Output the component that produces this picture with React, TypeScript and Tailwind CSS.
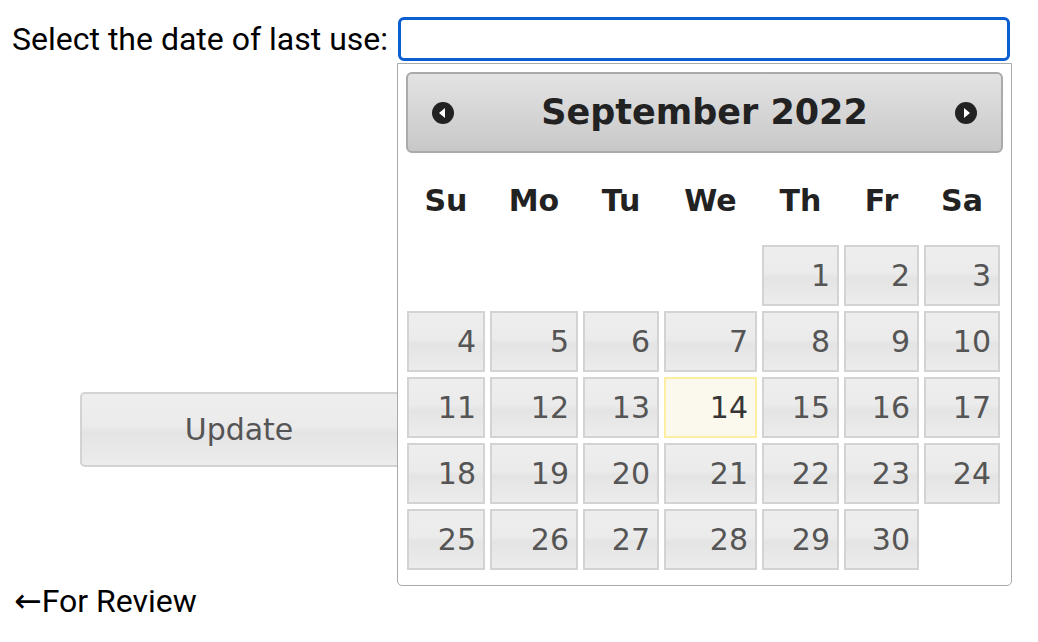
import React from "react";

const dayNames = ["Su", "Mo", "Tu", "We", "Th", "Fr", "Sa"];

// September 2022 starts on a Thursday
const cells: (number | null)[] = [
  null, null, null, null, 1, 2, 3,
  4, 5, 6, 7, 8, 9, 10,
  11, 12, 13, 14, 15, 16, 17,
  18, 19, 20, 21, 22, 23, 24,
  25, 26, 27, 28, 29, 30, null,
];

const cols = "grid grid-cols-[78px_88px_76px_93px_77px_75px_76px] gap-x-[5px]";

const CircleArrow = ({ dir }: { dir: "w" | "e" }) => (
  <svg width="24" height="24" viewBox="0 0 24 24">
    <circle cx="12" cy="12" r="11" fill="#222" />
    {dir === "w" ? (
      <polygon points="14,7 14,17 8,12" fill="#fff" />
    ) : (
      <polygon points="10,7 10,17 16,12" fill="#fff" />
    )}
  </svg>
);

const DayCell = ({ day }: { day: number | null }) => {
  if (day === null) return <div />;
  const today = day === 14;
  return (
    <a
      href="#"
      className={
        today
          ? "flex h-[61px] items-center justify-end border-2 border-[#fcefa1] bg-[#fbf9ee] pr-[7px] text-[#363636]"
          : "flex h-[61px] items-center justify-end border-2 border-[#d3d3d3] bg-[linear-gradient(to_bottom,#eeeeee_0%,#ebebeb_46%,#e4e4e4_54%,#ececec_100%)] pr-[7px] text-[#555]"
      }
    >
      {day}
    </a>
  );
};

const Datepicker = () => (
  <div className="absolute left-[397px] top-[63px] h-[523px] w-[615px] rounded-b-[5px] border border-[#aaa] bg-white px-[8px] pt-[8px] font-['DejaVu_Sans',sans-serif]">
    <div className="flex h-[81px] items-center justify-between rounded-[6px] border-2 border-[#aaa] bg-[linear-gradient(to_bottom,#e3e3e3,#c8c8c8)] px-[23px]">
      <CircleArrow dir="w" />
      <span className="text-[35px] font-bold text-[#222]">September 2022</span>
      <CircleArrow dir="e" />
    </div>
    <div className={`ml-[1px] mt-[14px] text-[30px] ${cols}`}>
      {dayNames.map((d) => (
        <div key={d} className="flex h-[66px] items-center justify-center font-bold text-[#222]">
          {d}
        </div>
      ))}
    </div>
    <div className={`ml-[1px] mt-[12px] gap-y-[5px] text-[30px] ${cols}`}>
      {cells.map((d, i) => (
        <DayCell key={i} day={d} />
      ))}
    </div>
  </div>
);

export default function App() {
  return (
    <div className="relative h-[642px] w-[1038px] bg-white font-['Roboto',sans-serif] text-black">
      <div className="flex items-center pl-[12px] pt-[17px]">
        <label className="text-[32px] leading-[44px]">Select the date of last use:</label>
        <input
          autoFocus
          className="ml-[10px] h-[44px] w-[612px] rounded-[6px] border-[3px] border-[#0b5fd0] px-2 text-[27px] outline-none"
        />
      </div>
      <button className="ml-[80px] mt-[331px] h-[75px] w-[330px] rounded-[5px] border-2 border-[#d3d3d3] bg-[linear-gradient(to_bottom,#eeeeee_0%,#ebebeb_46%,#e4e4e4_54%,#ececec_100%)] pr-[12px] font-['DejaVu_Sans',sans-serif] text-[30px] text-[#555]">
        Update
      </button>
      <div className="pl-[14px] pt-[116px] text-[32px] leading-[36px]">
        <a href="#">
          <span className="font-['DejaVu_Sans',sans-serif] text-[33px]">←</span>For Review
        </a>
      </div>
      <Datepicker />
    </div>
  );
}
